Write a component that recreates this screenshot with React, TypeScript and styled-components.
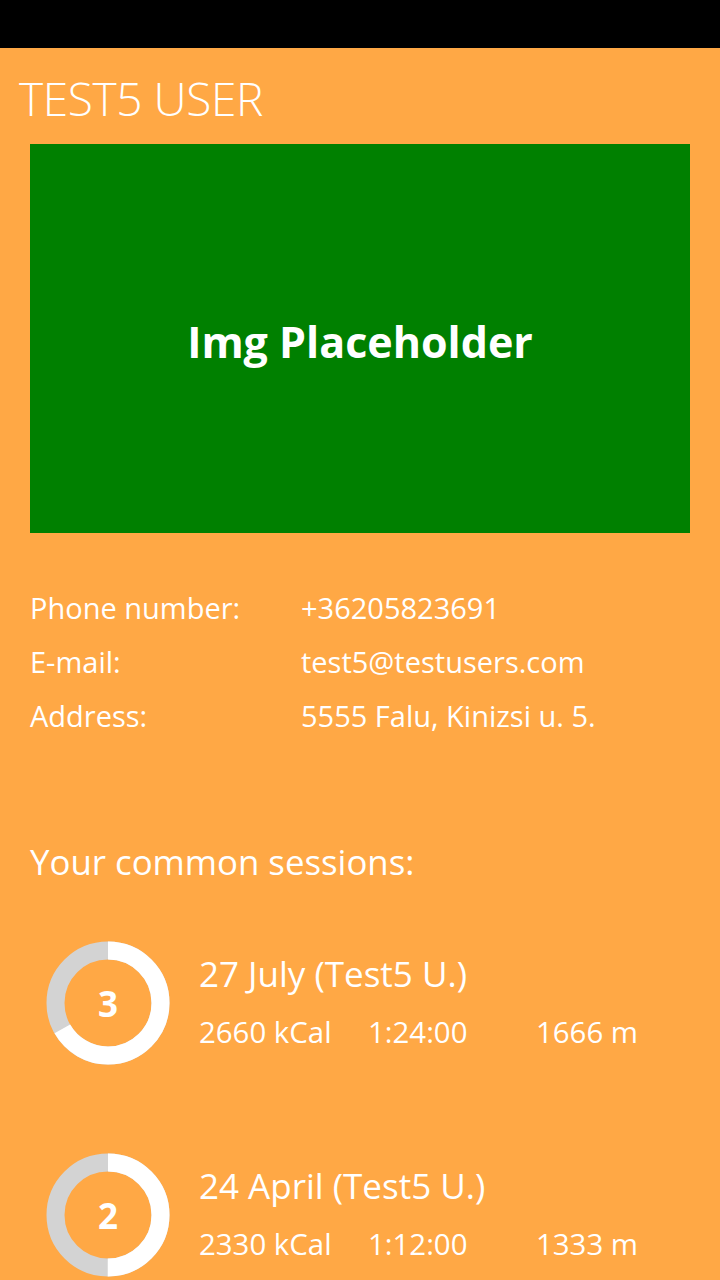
import React from "react";
import styled, { createGlobalStyle } from "styled-components";

const GlobalStyle = createGlobalStyle`
  html, body { margin: 0; padding: 0; background: #FFA845; }
  body { font-family: "Open Sans", "Noto Sans", sans-serif; color: #ffffff; }
`;

const Page = styled.div`
  width: 720px;
  min-height: 1280px;
  background: #FFA845;
  overflow: hidden;
  display: flex;
  flex-direction: column;
`;

const StatusBar = styled.div`
  height: 48px;
  background: #000000;
  flex-shrink: 0;
`;

const Title = styled.h1`
  margin: 0;
  padding: 22px 0 0 19px;
  font-size: 46px;
  line-height: 56px;
  font-weight: 300;
  letter-spacing: -0.4px;
`;

const Placeholder = styled.div`
  margin: 18px 30px 0 30px;
  height: 389px;
  box-sizing: border-box;
  padding-top: 6px;
  background: #008000;
  display: flex;
  align-items: center;
  justify-content: center;
  font-size: 43px;
  font-weight: 700;
`;

const InfoList = styled.div`
  margin-top: 48px;
  padding: 0 30px;
  display: flex;
  flex-direction: column;
`;

const InfoRow = styled.div`
  display: grid;
  grid-template-columns: 271px 1fr;
  font-size: 29px;
  line-height: 54px;
  font-weight: 400;
`;

const SectionTitle = styled.h2`
  margin: 96px 0 0 0;
  padding-left: 30px;
  font-size: 34.8px;
  line-height: 46px;
  font-weight: 400;
`;

const SessionList = styled.div`
  margin-top: 56px;
  padding-left: 46px;
  display: flex;
  flex-direction: column;
  gap: 88px;
`;

const Session = styled.div`
  display: flex;
  align-items: flex-start;
  gap: 29px;
`;

const Ring = styled.div`
  display: grid;
  width: 124px;
  height: 124px;
  flex-shrink: 0;
  & > * { grid-area: 1 / 1; }
`;

const RingLabel = styled.span`
  align-self: center;
  justify-self: center;
  font-size: 35px;
  font-weight: 700;
  line-height: 1;
`;

const SessionText = styled.div`
  padding-top: 10px;
  display: flex;
  flex-direction: column;
  gap: 15px;
`;

const SessionTitle = styled.div`
  font-size: 35px;
  line-height: 46px;
  font-weight: 400;
`;

const Stats = styled.div`
  display: grid;
  grid-template-columns: 169px 168px auto;
  font-size: 29.4px;
  line-height: 40px;
  font-weight: 400;
`;

const ProgressRing = ({ fraction }: { fraction: number }) => {
  const r = 52.5;
  const c = 2 * Math.PI * r;
  return (
    <svg width="124" height="124" viewBox="0 0 124 124">
      <circle cx="62" cy="62" r={r} fill="none" stroke="#D3D3D3" strokeWidth="18" />
      <circle
        cx="62"
        cy="62"
        r={r}
        fill="none"
        stroke="#ffffff"
        strokeWidth="18"
        strokeDasharray={`${c * fraction} ${c}`}
        transform="rotate(-90 62 62)"
      />
    </svg>
  );
};

const sessions = [
  { n: 3, frac: 2 / 3, title: "27 July (Test5 U.)", kcal: "2660 kCal", time: "1:24:00", dist: "1666 m" },
  { n: 2, frac: 0.5, title: "24 April (Test5 U.)", kcal: "2330 kCal", time: "1:12:00", dist: "1333 m" },
];

export default function App() {
  return (
    <Page>
      <GlobalStyle />
      <StatusBar />
      <Title>TEST5 USER</Title>
      <Placeholder>Img Placeholder</Placeholder>
      <InfoList>
        <InfoRow><span>Phone number:</span><span>+36205823691</span></InfoRow>
        <InfoRow><span>E-mail:</span><span>test5@testusers.com</span></InfoRow>
        <InfoRow><span>Address:</span><span>5555 Falu, Kinizsi u. 5.</span></InfoRow>
      </InfoList>
      <SectionTitle>Your common sessions:</SectionTitle>
      <SessionList>
        {sessions.map((s) => (
          <Session key={s.title}>
            <Ring>
              <ProgressRing fraction={s.frac} />
              <RingLabel>{s.n}</RingLabel>
            </Ring>
            <SessionText>
              <SessionTitle>{s.title}</SessionTitle>
              <Stats>
                <span>{s.kcal}</span>
                <span>{s.time}</span>
                <span>{s.dist}</span>
              </Stats>
            </SessionText>
          </Session>
        ))}
      </SessionList>
    </Page>
  );
}
